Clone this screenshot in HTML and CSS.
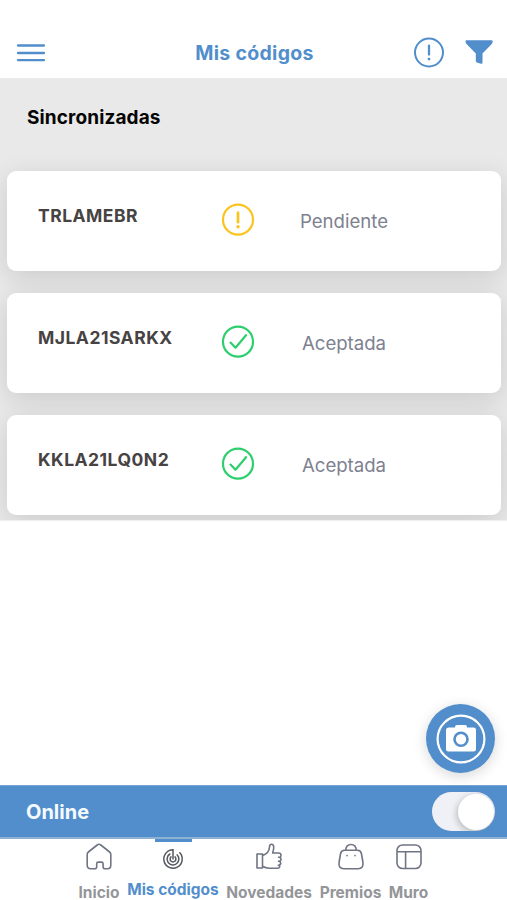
FILE: index.html
```html
<!DOCTYPE html>
<html lang="es">
<head>
<meta charset="utf-8">
<title>Mis códigos</title>
<link rel="stylesheet" href="styles.css">
</head>
<body>
<div class="app">
  <header class="header">
    <svg class="menu" width="30" height="20" viewBox="0 0 30 20"><path d="M2 2.500h26M2 10h26M2 17.200h26" fill="none" stroke="currentColor" stroke-width="2.300" stroke-linecap="round"/></svg>
    <h1 class="title">Mis códigos</h1>
    <div class="actions">
      <svg width="32" height="32" viewBox="0 0 32 32" fill="none" stroke="currentColor"><circle cx="16" cy="15.500" r="14" stroke-width="2"/><path d="M16 8.700v8.800" stroke-width="2.300" stroke-linecap="round"/><circle cx="16" cy="22.100" r="1.400" fill="currentColor" stroke="none"/></svg>
      <svg width="28" height="26" viewBox="0 0 28 26"><path d="M1.500.3h25q1.200 0 1.200 1.200 0 1.600-1.200 2.700L17.500 13.500V22.500q0 1.500-1.500 1.200l-4.200-1.300q-1-.3-1-1.300v-7.600L1.800 4.200Q.6 3.100.5 1.500.4.300 1.500.3z" fill="currentColor"/></svg>
    </div>
  </header>

  <section class="synced">
    <h2 class="section-title">Sincronizadas</h2>
    <div class="cards">
      <article class="card">
        <strong class="code">TRLAMEBR</strong>
        <svg class="state pending" width="34" height="34" viewBox="0 0 34 34" fill="none" stroke="currentColor"><circle cx="17" cy="16.700" r="15" stroke-width="2.200"/><path d="M17 9.700v9.500" stroke-width="2.700" stroke-linecap="round"/><circle cx="17" cy="23.700" r="1.700" fill="currentColor" stroke="none"/></svg>
        <span class="status">Pendiente</span>
      </article>
      <article class="card">
        <strong class="code">MJLA21SARKX</strong>
        <svg class="state accepted" width="34" height="34" viewBox="0 0 34 34" fill="none" stroke="currentColor" stroke-linecap="round" stroke-linejoin="round"><circle cx="17" cy="16.700" r="15" stroke-width="2.200"/><path d="M9.500 17.600l5 5.100L25 10.200" stroke-width="2.200"/></svg>
        <span class="status">Aceptada</span>
      </article>
      <article class="card">
        <strong class="code">KKLA21LQ0N2</strong>
        <svg class="state accepted" width="34" height="34" viewBox="0 0 34 34" fill="none" stroke="currentColor" stroke-linecap="round" stroke-linejoin="round"><circle cx="17" cy="16.700" r="15" stroke-width="2.200"/><path d="M9.500 17.600l5 5.100L25 10.200" stroke-width="2.200"/></svg>
        <span class="status">Aceptada</span>
      </article>
    </div>
  </section>

  <div class="camera">
    <svg width="50" height="50" viewBox="0 0 50 50"><circle cx="25" cy="25" r="23.400" fill="none" stroke="#fff" stroke-width="2.200"/><path d="M13 13.500h6V13q0-2 2-2h8q2 0 2 2v.5h6.500q2.500 0 2.500 2.500v19q0 2.500-2.500 2.500h-25Q10 37.500 10 35V16q0-2.500 3-2.500z" fill="#fff"/><circle cx="25" cy="25.200" r="6.500" fill="none" stroke="#518ecb" stroke-width="2.600"/></svg>
  </div>

  <div class="online">
    <span class="online-label">Online</span>
    <div class="toggle"><div class="knob"></div></div>
  </div>

  <nav class="tabs">
    <div class="tab inicio">
      <svg width="28" height="28" viewBox="0 0 28 28" fill="none" stroke="currentColor" stroke-width="1.600" stroke-linejoin="round"><path d="M2.200 11.500q0-1.600 1.200-2.500l8.800-7q1.800-1.400 3.600 0l8.800 7q1.200.9 1.200 2.500v10.700q0 3.500-3.500 3.500h-2.200q-2 0-2-2v-3q0-1.600-1.600-1.600h-3.200q-1.600 0-1.600 1.600v3q0 2-2 2H5.700q-3.500 0-3.500-3.500z"/></svg>
      <span>Inicio</span>
    </div>
    <div class="tab codigos active">
      <svg width="24" height="24" viewBox="0 0 24 24" fill="none" stroke="currentColor" stroke-width="1.500" stroke-linecap="round"><path d="M12 12V2.800A9.200 9.200 0 1 0 18.800 5.800"/><path d="M8.900 7A5.900 5.900 0 1 0 16.200 7.900"/><path d="M10 9.900A2.900 2.900 0 1 0 14 9.900"/></svg>
      <span>Mis códigos</span>
    </div>
    <div class="tab novedades">
      <svg width="28" height="28" viewBox="0 0 28 28" fill="none" stroke="currentColor" stroke-width="1.600" stroke-linejoin="round" stroke-linecap="round"><path d="M2 11h5.500v14H2zM7.500 12.500c4.500-1.500 6.800-4.500 7-8.500 0-1.800.6-2.700 2-2.700 2.500 0 3 3 1.200 8.700h5.800q2.500 0 2.500 2.200t-2.400 2.100M23.600 14.300q2.400 0 2.400 2t-2.500 2M23.500 18.300q2.200.2 2.200 2t-2.400 1.900M23.300 22.200q1.600.2 1.400 1.600T22.200 25.200H14q-3.500-.2-6.500-1.900"/></svg>
      <span>Novedades</span>
    </div>
    <div class="tab premios">
      <svg width="28" height="28" viewBox="0 0 28 28" fill="none" stroke="currentColor" stroke-width="1.600" stroke-linecap="round"><path d="M7.500 7.300h13q3.300 0 3.900 3.200l1.500 8.500q1 6.700-4.700 6.700H6.800Q1.100 25.700 2.100 19l1.500-8.500q.6-3.200 3.900-3.200zM8.700 7C9 3.500 11 1.500 14 1.500S19 3.500 19.300 7"/><path d="M10 12.500v.1M18 12.500v.1" stroke-width="1.700"/></svg>
      <span>Premios</span>
    </div>
    <div class="tab muro">
      <svg width="28" height="28" viewBox="0 0 28 28" fill="none" stroke="currentColor" stroke-width="1.600"><rect x="2" y="2" width="24" height="23.500" rx="5.500"/><path d="M2 8.700h24M10.600 8.700v16.800"/></svg>
      <span>Muro</span>
    </div>
  </nav>
</div>
</body>
</html>
```
FILE: styles.css
```css
* { box-sizing: border-box; }
body { margin: 0; background: #fff; font-family: Inter, "Liberation Sans", sans-serif; }
svg { display: block; flex: none; }
h1, h2 { margin: 0; }
.app { width: 507px; height: 900px; display: flex; flex-direction: column; overflow: hidden; white-space: nowrap; position: relative; }

.header { height: 78px; padding: 27px 14px 0 16px; display: grid; grid-template-columns: 90px 1fr 90px; align-items: center; color: #518ecb; }
.title { font-size: 19.500px; font-weight: 650; line-height: 24px; text-align: center; letter-spacing: .3px; }
.actions { display: flex; align-items: center; justify-content: flex-end; gap: 20px; }

.synced { height: 443px; background: #e9e9e9; overflow: hidden; border-bottom: 1px solid #eee; }
.section-title { height: 93px; padding: 28px 27px 0; font-size: 19px; line-height: 24px; font-weight: 650; letter-spacing: .12px; color: #050505; }
.cards { display: flex; flex-direction: column; gap: 22px; padding: 0 6px 0 7px; }
.card { height: 100px; background: #fff; border-radius: 9px; box-shadow: 0 6px 26px rgba(0, 0, 0, .13); display: grid; grid-template-columns: 183px 57px 130px; align-items: start; padding-left: 31px; position: relative; }
.code { font-size: 17.500px; line-height: 22px; font-weight: 650; letter-spacing: .48px; color: #474343; margin-top: 34px; }
.state { margin-top: 32px; }
.pending { color: #fac41c; }
.accepted { color: #2bcf6b; }
.status { width: 132px; margin-top: 38px; text-align: center; font-size: 18.600px; line-height: 25px; color: #7d8190; }

.camera { position: absolute; left: 426px; top: 704px; width: 69px; height: 69px; border-radius: 50%; background: #518ecb; box-shadow: 0 3px 14px rgba(0, 0, 0, .16); display: flex; align-items: center; justify-content: center; }

.online { height: 54px; margin-top: auto; padding: 0 12px 0 26px; display: flex; align-items: center; justify-content: space-between; background: #518ecb; border-top: 1px solid #76a6d5; border-bottom: 2px solid #8fb2d3; }
.online-label { font-size: 20px; line-height: 24px; font-weight: 650; color: #f5faff; }
.toggle { width: 63px; height: 39px; border-radius: 20px; background: #f0f1f6; display: flex; justify-content: flex-end; align-items: center; padding-right: 1px; overflow: hidden; }
.knob { width: 36px; height: 36px; border-radius: 50%; background: #fff; box-shadow: -1px 2px 7px rgba(0, 0, 0, .25); }

.tabs { height: 61px; flex: none; padding-left: 78px; display: flex; gap: 7px; color: #707584; }
.tab { display: flex; flex-direction: column; align-items: center; padding-top: 4px; }
.tab span { margin-top: 15px; font-size: 15.500px; line-height: 14px; font-weight: 650; color: #949599; }
.inicio { width: 42px; }
.codigos { width: 92px; }
.novedades { width: 86px; }
.premios { width: 63px; }
.muro { width: 39px; }
.active { padding-top: 0; color: #55585e; }
.active::before { content: ""; width: 37px; height: 3px; background: #518ecb; margin-bottom: 5px; }
.active span { color: #518ecb; margin-top: 12px; }
```
